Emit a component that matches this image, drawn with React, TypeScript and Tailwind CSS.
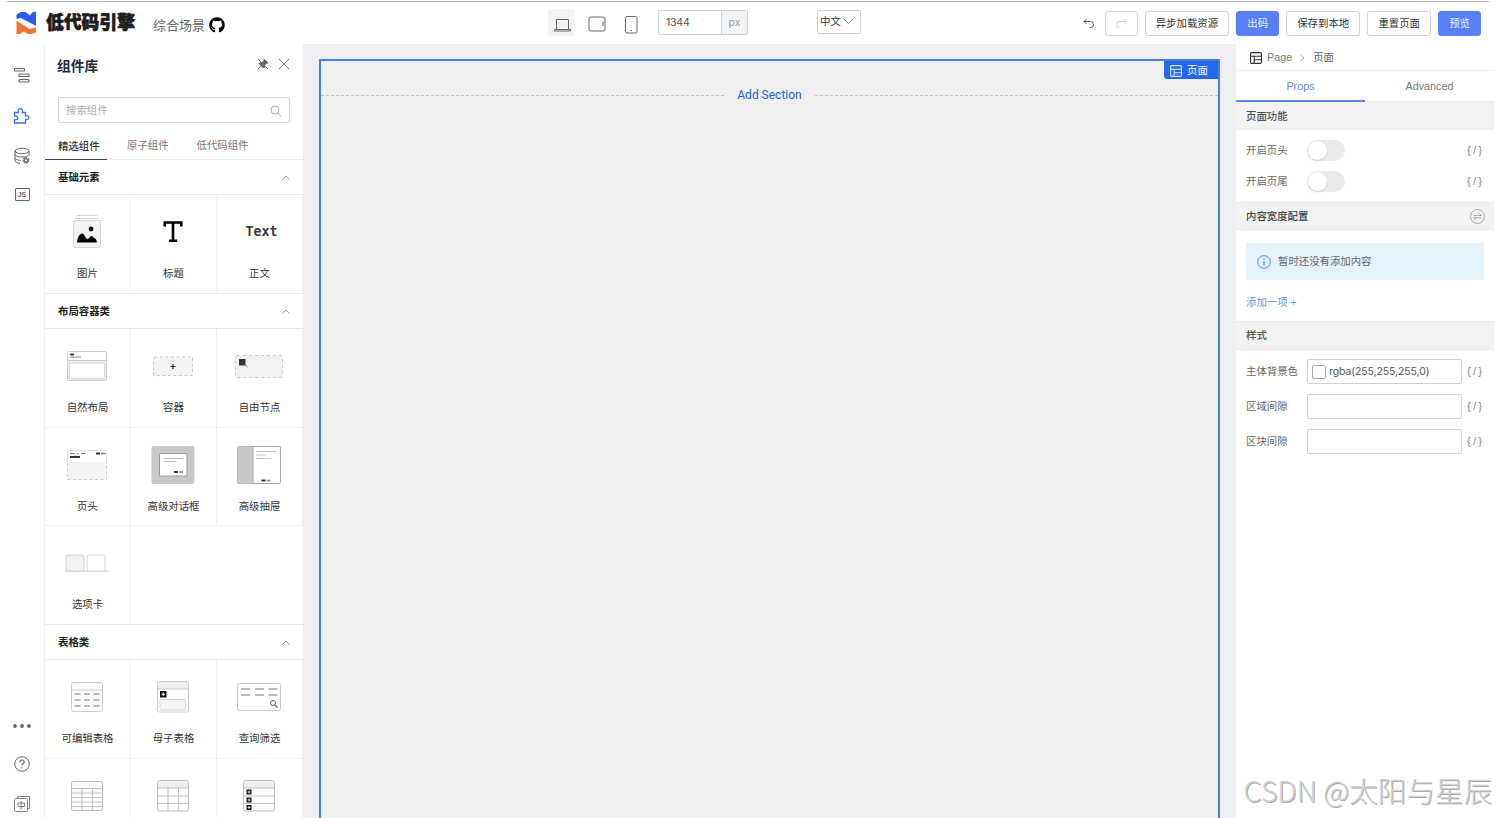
import type { ReactNode } from 'react';
import { FaGithub } from 'react-icons/fa';

interface Widget {
  label: string;
  icon: ReactNode;
}

interface WidgetGroup {
  title: string;
  items: Widget[];
}

const G = '#d4d4d4';

// Thumbnails share a 60x50 box, the drawing is centred on 30,25
const Thumb = ({ children }: { children: ReactNode }) => (
  <svg width="60" height="50" viewBox="0 0 60 50" fill="none" className="-ml-[1.500px] shrink-0">
    {children}
  </svg>
);

const groups: WidgetGroup[] = [
  {
    title: '基础元素',
    items: [
      {
        label: '图片',
        icon: (
          <Thumb>
            <path d="M20 8.5h20M18 11.5h24" stroke={G} strokeWidth="1.2" />
            <rect x="16.5" y="13.5" width="27" height="27" rx="2" fill="#f3f3f3" stroke={G} />
            <circle cx="34" cy="22" r="2.4" fill="#000" />
            <path d="M20 35.5c0-4 2.6-9 5-9 2.5 0 3.5 5.500 5.500 5.500s2-3 4-3 2 2.500 3.300 2.500c1.200 0 2 2 2 4z" fill="#000" />
          </Thumb>
        ),
      },
      {
        label: '标题',
        icon: (
          <Thumb>
            <path d="M21.800 19.500v-4h16.500v4M30 15.500v17.500M26 33.700h8.200" stroke="#000" strokeWidth="2.600" />
          </Thumb>
        ),
      },
      {
        label: '正文',
        icon: (
          <div className="flex h-[50px] items-center pl-1 font-['DejaVu_Sans_Mono',monospace] text-[13.300px] font-bold text-[#3a3a3a]">
            Text
          </div>
        ),
      },
    ],
  },
  {
    title: '布局容器类',
    items: [
      {
        label: '自然布局',
        icon: (
          <Thumb>
            <rect x="10.500" y="10.500" width="39" height="29" rx="1.500" fill="#f0f0f0" stroke="#ccc" />
            <path d="M11 11h38v8H11z" fill="#fff" />
            <path d="M11 19.500h38" stroke="#ccc" />
            <rect x="12.500" y="22" width="35" height="15.500" fill="#fff" stroke="#d8d8d8" />
            <path d="M13 13.500h4" stroke="#333" strokeWidth="1.800" />
            <path d="M13 16h11" stroke="#888" strokeWidth="1" />
          </Thumb>
        ),
      },
      {
        label: '容器',
        icon: (
          <Thumb>
            <rect x="10.500" y="16" width="39" height="18.500" rx="1" fill="#f4f4f4" stroke="#c8c8c8" strokeDasharray="3 2.500" />
            <path d="M27.500 25.500h5M30 23v5" stroke="#222" strokeWidth="1.200" />
          </Thumb>
        ),
      },
      {
        label: '自由节点',
        icon: (
          <Thumb>
            <rect x="6.500" y="14.500" width="47" height="22" rx="1.500" fill="#f1f1f1" stroke="#c8c8c8" strokeDasharray="3 3" />
            <path d="M10 18h6.500v6.500H10z" fill="#333" />
            <path d="M15 23l3.500 3" stroke="#777" />
          </Thumb>
        ),
      },
      {
        label: '页头',
        icon: (
          <Thumb>
            <rect x="10.500" y="21" width="39" height="18.500" fill="#f4f4f4" stroke="#ccc" strokeDasharray="3 2.500" />
            <path d="M10.500 22V12a1.500 1.500 0 0 1 1.500-1.500h36a1.500 1.500 0 0 1 1.500 1.500v10" fill="#fff" stroke="#ddd" />
            <path d="M13 13.500h4.500M20 13.500h1.500M24 13.500h4.500" stroke="#777" />
            <path d="M39 13.500h4" stroke="#222" strokeWidth="1.800" />
            <path d="M44 13.500h4.500" stroke="#777" strokeWidth="1.400" />
            <path d="M13 17h10" stroke="#222" strokeWidth="1.800" />
          </Thumb>
        ),
      },
      {
        label: '高级对话框',
        icon: (
          <Thumb>
            <rect x="8.500" y="6" width="43" height="38" rx="2" fill="#c8c8c8" />
            <rect x="16.500" y="13.500" width="27.500" height="22.500" rx="1" fill="#fff" stroke="#999" />
            <path d="M20.500 18.500h19.500M20.500 21.500h12.500" stroke="#bbb" />
            <path d="M31 32h4" stroke="#222" strokeWidth="1.800" />
            <path d="M36 32h4" stroke="#888" strokeWidth="1.500" />
          </Thumb>
        ),
      },
      {
        label: '高级抽屉',
        icon: (
          <Thumb>
            <rect x="8.500" y="6.500" width="43" height="37" rx="1.500" fill="#c8c8c8" stroke="#bbb" />
            <path d="M24 6.500h26a1.500 1.500 0 0 1 1.500 1.500v34a1.500 1.500 0 0 1-1.500 1.500H24z" fill="#fff" stroke="#aaa" />
            <path d="M27 11.500h20M27 15h10M27 18.500h15" stroke="#c4c4c4" />
            <path d="M32.500 40.500h4" stroke="#222" strokeWidth="1.800" />
            <path d="M37.500 40.500h4" stroke="#888" strokeWidth="1.500" />
          </Thumb>
        ),
      },
      {
        label: '选项卡',
        icon: (
          <Thumb>
            <path d="M9 33V19a2 2 0 0 1 2-2h14a2 2 0 0 1 2 2v14" fill="#f2f2f2" stroke={G} />
            <path d="M30 33V19a2 2 0 0 1 2-2h14a2 2 0 0 1 2 2v14" fill="#fff" stroke={G} />
            <path d="M8.500 33.200h43" stroke="#ccc" />
          </Thumb>
        ),
      },
    ],
  },
  {
    title: '表格类',
    items: [
      {
        label: '可编辑表格',
        icon: (
          <Thumb>
            <rect x="14.500" y="10.500" width="31" height="29" rx="2" fill="#fafafa" stroke="#ccc" />
            <path d="M15 18h30" stroke="#ccc" />
            <path d="M17.500 22h6M27 22h6M36.500 22h6M17.500 28h6M27 28h6M36.500 28h6M17.500 34h6M27 34h6M36.500 34h6" stroke="#bbb" strokeWidth="1.800" />
          </Thumb>
        ),
      },
      {
        label: '母子表格',
        icon: (
          <Thumb>
            <rect x="14.500" y="9.500" width="31" height="30.500" rx="2" fill="#fff" stroke="#ccc" />
            <path d="M15 11.500a1.500 1.500 0 0 1 1.500-1.500h27a1.500 1.500 0 0 1 1.500 1.500V17H15z" fill="#eee" />
            <path d="M15 17h30" stroke="#ccc" />
            <rect x="17" y="27.500" width="25.500" height="10.500" rx="1.500" fill="#f4f4f4" stroke="#d4d4d4" />
            <path d="M17 19h6.500v6.500H17z" fill="#111" />
            <path d="M18.500 22.250h3.500M20.250 20.500v3.500" stroke="#fff" />
          </Thumb>
        ),
      },
      {
        label: '查询筛选',
        icon: (
          <Thumb>
            <rect x="8.500" y="11.500" width="43" height="27" rx="2" fill="#fff" stroke="#c8c8c8" />
            <path d="M12 17h9M26 17h9M39.500 17h9M12 23h9M26 23h9M39.500 23h9" stroke="#bbb" strokeWidth="1.800" />
            <circle cx="44" cy="31" r="2.500" stroke="#666" />
            <path d="M46 33l2.500 2.500" stroke="#666" strokeWidth="1.200" />
          </Thumb>
        ),
      },
      {
        label: '',
        icon: (
          <Thumb>
            <rect x="14.500" y="10.500" width="31" height="29" rx="2" fill="#fafafa" stroke="#bbb" />
            <path d="M15 17.500h30M15 22h30M15 26.500h30M15 31h30M15 35.500h30M25 17.500v22M35.500 17.500v22" stroke="#c4c4c4" />
          </Thumb>
        ),
      },
      {
        label: '',
        icon: (
          <Thumb>
            <rect x="14.500" y="9.500" width="31" height="30.500" rx="2" fill="#fff" stroke="#bbb" />
            <path d="M15 10h30v7H15z" fill="#eee" />
            <path d="M15 17h30M15 25h30M15 32.500h30M25 17v23M35.500 17v23" stroke="#c4c4c4" />
          </Thumb>
        ),
      },
      {
        label: '',
        icon: (
          <Thumb>
            <rect x="14.500" y="9.500" width="31" height="30.500" rx="2" fill="#fff" stroke="#bbb" />
            <path d="M15 10h30v7H15z" fill="#eee" />
            <path d="M15 17h30M15 25h30M15 32.500h30" stroke="#c4c4c4" />
            <path d="M17.500 18.500h5v5h-5zM17.500 26.500h5v5h-5zM17.500 34h5v5h-5z" fill="#111" />
            <path d="M18.500 21h3M20 19.500v3M18.500 29h3M20 27.500v3M18.500 36.500h3M20 35v3" stroke="#fff" strokeWidth=".8" />
          </Thumb>
        ),
      },
    ],
  },
];

const LayoutIcon = ({ className }: { className?: string }) => (
  <svg width="12" height="12" viewBox="0 0 12 12" fill="none" stroke="currentColor" strokeWidth="1.100" className={className}>
    <rect x=".6" y=".6" width="10.800" height="10.800" rx=".8" />
    <path d="M.6 4.200h10.800M4.200 4.200v7.200M4.200 7.700h7.200" />
  </svg>
);

const ToolButton = ({ children, primary }: { children: ReactNode; primary?: boolean }) => (
  <button
    className={`h-[25px] rounded-[3px] border px-[10.100px] pt-px whitespace-nowrap ${
      primary ? 'border-[#5780f7] bg-[#5780f7] text-[#eef2ff]' : 'border-[#cfd2d8] bg-white text-[#333]'
    }`}
  >
    {children}
  </button>
);

function Header() {
  return (
    <header className="flex h-[44px] shrink-0 flex-col bg-white">
      <div className="mx-[7px] mt-px h-px shrink-0 bg-[#a9adc6]" />
      <div className="flex h-[42px] items-center">
        <div className="flex w-[548px] items-center pl-4">
          <svg width="20" height="24" viewBox="0 0 20 24" className="shrink-0">
            <path d="M.5 3.500L5 1h4.500l4.500 3.500L16 1.500l4-1v14.500L5 7 .5 8z" fill="#2c5df0" />
            <path d="M.5 9.500l13 8.500 6.500-1.500v5L15.500 23h-3L7 20.500 4.500 23H.5z" fill="#f2743a" />
          </svg>
          <span className="ml-[10px] pt-0.5 text-[17.800px] leading-none font-black whitespace-nowrap text-[#1d1d1d] [-webkit-text-stroke:0.7px_#1d1d1d]">
            低代码引擎
          </span>
          <span className="ml-[18px] pt-[5px] text-[13px] whitespace-nowrap text-[#666]">综合场景</span>
          <FaGithub className="mt-[3px] ml-1 h-4 w-4 text-black" />
        </div>

        <div className="flex w-[313px] items-center text-[#666]">
          <div className="-mt-[1px] flex h-[27px] w-[27px] items-center justify-center rounded-sm bg-[#f4f4f4]">
            <svg width="17" height="14" viewBox="0 0 17 14" fill="none" stroke="currentColor" className="mt-[4px] ml-0.5">
              <path d="M2.500 11V1.500h12V11M.5 11.500h16v1.500H.5z" />
            </svg>
          </div>
          <svg width="18" height="16" viewBox="0 0 18 16" fill="none" stroke="currentColor" className="mt-0.5 ml-[13px]">
            <rect x="1" y="1" width="16" height="14" rx="2" />
            <path d="M15 5.500v4.500" strokeWidth="1.200" />
          </svg>
          <svg width="13" height="18" viewBox="0 0 13 18" fill="none" stroke="currentColor" className="mt-[3px] ml-[19px]">
            <rect x=".5" y=".5" width="11.500" height="16.500" rx="1.500" />
            <path d="M5.500 14.500h1.500" />
          </svg>
          <div className="-mt-px ml-[20px] flex h-[25px] w-[90px] rounded-[2px] border border-[#d0d2d6] font-['Inter',sans-serif] text-[10.500px]">
            <span className="flex flex-1 items-center pl-[7px] tracking-[-0.200px] text-[#555]">1344</span>
            <span className="flex w-[26px] items-center justify-center border-l border-[#d0d2d6] bg-[#f2f3f5] text-[#9a9a9a]">px</span>
          </div>
          <div className="-mt-[3px] ml-auto flex h-6 w-11 items-center rounded-[2px] border border-[#d0d2d6] pl-0.5 text-[10.500px] whitespace-nowrap text-[#333]">
            中文
            <svg width="11" height="7" viewBox="0 0 11 7" fill="none" stroke="#888" className="ml-0.5">
              <path d="M1 1l4.500 4.500L10 1" />
            </svg>
          </div>
        </div>

        <div className="flex flex-1 items-center justify-end gap-[7px] pr-[15px] text-[10.400px]">
          <svg width="12" height="11" viewBox="0 0 12 11" fill="none" stroke="#555" className="mr-[3px]">
            <path d="M3.500 1L1 3.500 3.500 6M1 3.500h6.500a3 3 0 0 1 0 6H6.500" />
          </svg>
          <button className="flex h-[25px] w-[33px] items-center justify-center rounded-[3px] border border-[#d4d7dc]">
            <svg width="12" height="11" viewBox="0 0 12 11" fill="none" stroke="#d0d0d0">
              <path d="M8.500 1L11 3.500 8.500 6M11 3.500H4.500a3 3 0 0 0 0 6H5.500" />
            </svg>
          </button>
          <ToolButton>异步加载资源</ToolButton>
          <ToolButton primary>出码</ToolButton>
          <ToolButton>保存到本地</ToolButton>
          <ToolButton>重置页面</ToolButton>
          <ToolButton primary>预览</ToolButton>
        </div>
      </div>
    </header>
  );
}

function Rail() {
  return (
    <nav className="flex w-[45px] shrink-0 flex-col items-center border-r border-[#f0f0f2] bg-white pt-[22px] pb-[5px] text-[#666]">
      <svg width="18" height="18" viewBox="0 0 18 18" fill="none" stroke="currentColor" strokeWidth="1.200">
        <rect x="1.500" y="2.500" width="10" height="2.500" rx=".8" />
        <rect x="6" y="8" width="10" height="2.500" rx=".8" />
        <rect x="6" y="13.500" width="10" height="2.500" rx=".8" />
      </svg>
      <svg width="18" height="18" viewBox="0 0 18 18" fill="none" stroke="#3672e8" strokeWidth="1.300" className="mt-[23px]">
        <path d="M1.500 5.500h3.800c-.8-2 .2-3.800 2-3.800s2.800 1.800 2 3.800h3.200v3.500c1.800-.8 3.500.2 3.500 1.600s-1.700 2.500-3.500 1.700v3.700h-11v-3.300c2 .6 3.200-.4 3.200-1.700s-1.200-2.500-3.200-1.800z" />
      </svg>
      <svg width="18" height="18" viewBox="0 0 18 18" fill="none" stroke="currentColor" className="mt-[22px]">
        <ellipse cx="9" cy="4" rx="7" ry="2.700" />
        <path d="M2 4v10c0 1 2 2 5 2.300M16 4v5M2 7.500c0 1.300 3 2.500 7 2.500 2.500 0 5-.5 6-1.200M2 11c0 1.200 2.500 2.200 6 2.400" />
        <circle cx="13" cy="13.300" r="2.500" fill="#fff" strokeWidth="1.800" strokeDasharray="1.600 .6" />
        <circle cx="13" cy="13.300" r="1.500" />
      </svg>
      <div className="mt-[23px] flex h-[13px] w-[15px] items-center justify-center rounded-[1px] border border-[#666] text-[7px] leading-none font-bold">
        JS
      </div>

      <svg width="18" height="6" viewBox="0 0 18 6" fill="#666" className="mt-auto">
        <circle cx="2" cy="3" r="1.900" />
        <circle cx="9" cy="3" r="1.900" />
        <circle cx="16" cy="3" r="1.900" />
      </svg>
      <svg width="18" height="18" viewBox="0 0 18 18" fill="none" stroke="currentColor" className="mt-[26px]">
        <circle cx="9" cy="9" r="7.300" />
        <path d="M6.800 7.200c0-1.300 1-2.200 2.200-2.200s2.200.9 2.200 2c0 1.500-2.200 1.700-2.200 3.500M9 12v1.200" strokeWidth="1.200" />
      </svg>
      <svg width="18" height="18" viewBox="0 0 18 18" fill="none" stroke="#7c8187" className="mt-[22px]">
        <path d="M4.500 3V1.500h12v12H15" />
        <rect x="1.500" y="3.500" width="13" height="13" rx="1" />
        <path d="M5 8h6.500v3.500H5zM8.200 6v8.500" />
      </svg>
    </nav>
  );
}

function ComponentPanel() {
  return (
    <aside className="flex w-[258px] shrink-0 flex-col overflow-hidden bg-white text-[10.400px]">
      <div className="flex h-[44px] shrink-0 items-center pl-[12px]">
        <h2 className="pt-0.5 text-[13.800px] font-semibold text-[#222b3a]">组件库</h2>
        <svg width="12" height="12" viewBox="0 0 12 12" fill="#666" stroke="#666" className="-mt-1 ml-auto">
          <path d="M7 1l4 4-1.500.3-2 2 .2 2L6.500 10 2 5.500l1-1 2 .2 2-2z" />
          <path d="M4 8L.8 11.200M1 1l10 10" fill="none" />
        </svg>
        <svg width="12" height="12" viewBox="0 0 12 12" fill="none" stroke="#777" className="-mt-[5px] mr-[13px] ml-[9px]">
          <path d="M1 1l10 10M11 1L1 11" />
        </svg>
      </div>
      <div className="mt-[9px] mr-[13px] ml-[13px] flex h-[26px] shrink-0 items-center justify-between rounded-[2px] border border-[#d3d5d8] px-[7px] pt-px text-[#b0b0b0]">
        搜索组件
        <svg width="12" height="12" viewBox="0 0 12 12" fill="none" stroke="#aaa">
          <circle cx="5" cy="5" r="4" />
          <path d="M8 8l3.300 3.300" />
        </svg>
      </div>
      <div className="relative z-10 mt-[9px] flex h-[28px] shrink-0 border-b border-[#ececec] text-[#777]">
        <span className="flex h-[28px] w-[62px] items-center border-b border-[#444] pt-0.5 pl-[13px] font-medium whitespace-nowrap text-[#333]">
          精选组件
        </span>
        <span className="ml-5 flex items-center pt-px">原子组件</span>
        <span className="ml-[28px] flex items-center pt-px">低代码组件</span>
      </div>

      {groups.map(group => (
        <section key={group.title} className="shrink-0">
          <div className="-mt-px flex h-[36.400px] items-center justify-between border-y border-[#e9e9e9] pt-px pr-[13px] pl-[13px] font-bold text-[#222]">
            {group.title}
            <svg width="8" height="5" viewBox="0 0 8 5" fill="none" stroke="#999">
              <path d="M.5 4.500L4 1l3.500 3.500" />
            </svg>
          </div>
          <div className="grid grid-cols-3">
            {group.items.map((item, i) => (
              <div
                key={i}
                className="flex h-[98.500px] flex-col items-center border-r border-b border-[#f0f0f0] pt-3 text-[#333]"
              >
                {item.icon}
                {item.label && <span className="mt-[9px] leading-4">{item.label}</span>}
              </div>
            ))}
          </div>
        </section>
      ))}
    </aside>
  );
}

function Canvas() {
  return (
    <main className="flex min-w-0 flex-1 bg-[#edeff3] px-4 pt-[15px]">
      <div className="relative flex-1 border-2 border-b-0 border-[#4a80dc] bg-[#efefef]">
        <div className="absolute top-0 right-0 flex h-[18px] w-[54px] items-center rounded-bl-[3px] bg-[#2468f2] pt-px pl-[6px] text-[10.400px] text-white">
          <LayoutIcon className="mr-[5px] opacity-80" />
          页面
        </div>
        <div className="mt-[25px] flex h-[18px] items-center font-['Roboto',sans-serif] text-xs text-[#1e5fe0]">
          <div className="flex-1 border-t border-dashed border-[#c4c4c4]" />
          <span className="mx-[13px]">Add Section</span>
          <div className="flex-1 border-t border-dashed border-[#c4c4c4]" />
        </div>
      </div>
    </main>
  );
}

const VarButton = () => (
  <span className="ml-auto font-['Liberation_Sans',sans-serif] text-[11.500px] tracking-[2px] text-[#8a8a8a]">{'{/}'}</span>
);

const Switch = () => (
  <span className="ml-[19px] flex h-[21px] w-[38px] items-center rounded-full bg-[#e9eaec] px-px">
    <span className="h-[19px] w-[19px] rounded-full bg-white shadow-sm" />
  </span>
);

function SettingsPanel() {
  return (
    <aside className="mr-0.5 flex w-[258px] shrink-0 flex-col bg-white text-[10.400px] text-[#666]">
      <div className="flex h-[27px] shrink-0 items-center border-b border-[#eee] pt-px pl-[14px]">
        <LayoutIcon className="mr-[5px] text-[#333]" />
        <span className="text-[10.800px] text-[#777]">Page</span>
        <svg width="5" height="8" viewBox="0 0 5 8" fill="none" stroke="#aaa" className="mx-[8px]">
          <path d="M.5 1L4 4 .5 7" />
        </svg>
        页面
      </div>
      <div className="flex h-[31px] shrink-0 border-b border-[#e8e9eb] text-[10.800px]">
        <span className="flex h-[31px] flex-1 items-center justify-center border-b-2 border-[#5b83e6] pt-0.5 text-[#6488ea]">Props</span>
        <span className="flex flex-1 items-center justify-center pt-px text-[#777]">Advanced</span>
      </div>

      <div className="flex h-[28px] shrink-0 items-center bg-[#f2f3f5] pt-px pl-[10px] font-medium text-[#555]">页面功能</div>
      <div className="flex h-[72px] shrink-0 flex-col pt-[5px] pr-[10px] pl-[10px]">
        {['开启页头', '开启页尾'].map(label => (
          <div key={label} className="flex h-[31px] items-center">
            {label}
            <Switch />
            <VarButton />
          </div>
        ))}
      </div>

      <div className="flex h-[28px] shrink-0 items-center justify-between border-y border-[#e8e9eb] bg-[#f2f3f5] pt-px pr-[9px] pl-[10px] font-medium text-[#444]">
        内容宽度配置
        <svg width="15" height="15" viewBox="0 0 15 15" fill="none" stroke="#aaa">
          <circle cx="7.500" cy="7.500" r="7" />
          <path d="M3.500 6.500h8L9 4.200M11.500 8.800h-8L6 11" />
        </svg>
      </div>
      <div className="h-[91px] shrink-0 pt-[13px] pr-[10px] pl-[10px]">
        <div className="flex h-[37px] items-center bg-[#e4f2fc] pl-[11px]">
          <svg width="14" height="14" viewBox="0 0 14 14" fill="none" stroke="#4f8cf0" className="mr-[7px]">
            <circle cx="7" cy="7" r="6.300" />
            <path d="M7 3.300v1.500M7 6v4.700" strokeWidth="1.200" />
          </svg>
          暂时还没有添加内容
        </div>
        <div className="mt-[15px] leading-4 text-[#6d90e6]">添加一项 +</div>
      </div>

      <div className="flex h-[29px] shrink-0 items-center border-y border-[#e8e9eb] bg-[#f2f3f5] pl-[10px] font-medium text-[#555]">样式</div>
      <div className="flex flex-col gap-[10px] pt-[9px] pr-[10px] pl-[10px]">
        {['主体背景色', '区域间隙', '区块间隙'].map((label, i) => (
          <div key={label} className="flex h-[25px] items-center">
            <span className="w-[61px] whitespace-nowrap">{label}</span>
            <div className="flex h-[25px] w-[155px] items-center rounded-[2px] border border-[#cfcfcf] pl-1 font-['Inter',sans-serif] text-[10.500px] tracking-[-0.100px] text-[#555]">
              {i === 0 && (
                <>
                  <span className="mr-[3px] h-[14px] w-[14px] rounded-[2px] border border-[#aaa]" />
                  rgba(255,255,255,0)
                </>
              )}
            </div>
            <VarButton />
          </div>
        ))}
      </div>
    </aside>
  );
}

export default function App() {
  return (
    <div className="relative flex h-[818px] w-[1496px] flex-col overflow-hidden bg-white font-['Liberation_Sans','Noto_Sans_CJK_SC',sans-serif]">
      <Header />
      <div className="flex min-h-0 flex-1">
        <Rail />
        <ComponentPanel />
        <Canvas />
        <SettingsPanel />
      </div>
      <div className="absolute right-[4px] bottom-[7px] font-['Noto_Sans_CJK_SC',sans-serif] text-[28.600px] leading-[42px] font-light whitespace-nowrap text-[#d2d2d2] [text-shadow:1px_1px_0_#aaa]">
        CSDN @太阳与星辰
      </div>
    </div>
  );
}
